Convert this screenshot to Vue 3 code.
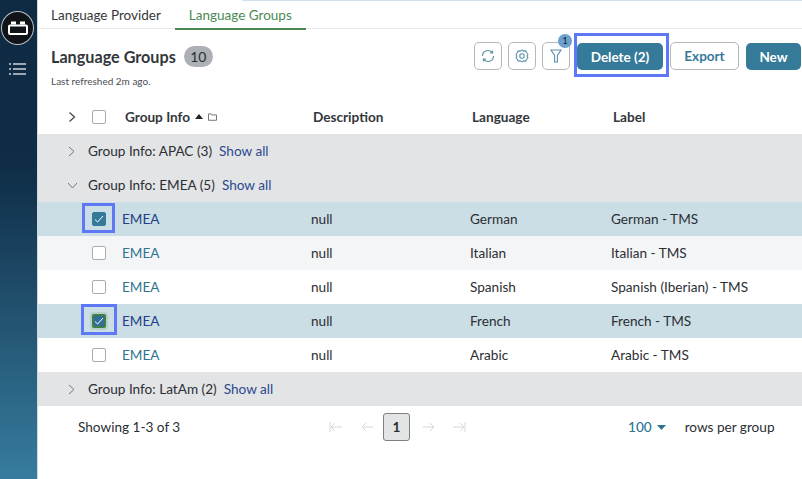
<script setup>
const rows = [
  { lang: 'German', label: 'German - TMS', state: 'checked' },
  { lang: 'Italian', label: 'Italian - TMS', state: 'alt' },
  { lang: 'Spanish', label: 'Spanish (Iberian) - TMS', state: '' },
  { lang: 'French', label: 'French - TMS', state: 'focus' },
  { lang: 'Arabic', label: 'Arabic - TMS', state: '' },
]
</script>

<template>
  <div class="page">
    <aside class="side">
      <div class="logo">
        <svg width="20" height="14" viewBox="0 0 20 14" fill="none">
          <rect x="1" y="4.5" width="18" height="8.5" rx="1" stroke="#fff" stroke-width="2" />
          <rect x="3" y="0.5" width="5" height="3" fill="#fff" />
          <rect x="12" y="0.5" width="5" height="3" fill="#fff" />
        </svg>
      </div>
      <svg class="menu" width="17" height="14" viewBox="0 0 17 14" stroke="#9aa9b5" stroke-width="2">
        <path d="M0 2h2M4 2h13M0 7h2M4 7h13M0 12h2M4 12h13" />
      </svg>
    </aside>
    <main class="main">
      <div class="topline"></div>
      <nav class="tabs">
        <span class="tab">Language Provider</span>
        <span class="tab active">Language Groups</span>
      </nav>
      <header class="head">
        <div class="titles">
          <div class="title-row">
            <h1>Language Groups</h1>
            <span class="count">10</span>
          </div>
          <div class="refreshed">Last refreshed 2m ago.</div>
        </div>
        <div class="actions">
          <button class="icon-btn">
            <svg width="14" height="14" viewBox="0 0 14 14" fill="none" stroke="#5b8fa8" stroke-width="1.1">
              <path d="M1.5 7a5.5 5.5 0 0 1 9.8-3.4M12.5 7a5.5 5.5 0 0 1-9.8 3.4" />
              <path d="M11.6 1.4v2.5H9.1M2.4 12.6v-2.5h2.5" />
            </svg>
          </button>
          <button class="icon-btn">
            <svg width="14" height="14" viewBox="0 0 16 16" fill="none" stroke="#5b8fa8" stroke-width="1.2">
              <path d="M8 1.2l2 1.2 2.3-.2 1 2.1 1.5 1.7L13.9 8l.9 2-1.5 1.7-1 2.1-2.3-.2-2 1.2-2-1.2-2.3.2-1-2.1L1.2 10l.9-2-.9-2 1.5-1.7 1-2.1 2.3.2z" />
              <circle cx="8" cy="8" r="2.6" />
            </svg>
          </button>
          <button class="icon-btn">
            <svg width="12" height="14" viewBox="0 0 12 14" fill="none" stroke="#5b8fa8" stroke-width="1.1">
              <path d="M1 1h10L7.4 6.5V13H4.6V6.5z" />
            </svg>
            <span class="badge">1</span>
          </button>
          <div class="del-wrap">
            <button class="primary del">Delete (2)</button>
            <span class="del-focus"></span>
          </div>
          <button class="outline">Export</button>
          <button class="primary new">New</button>
        </div>
      </header>
      <div class="row headrow">
        <span class="chev"><svg width="8" height="12" viewBox="0 0 8 12" fill="none" stroke="#444" stroke-width="1.2"><path d="M1.5 1.5L6.5 6l-5 4.5" /></svg></span>
        <span class="cb-cell"><span class="cb"></span></span>
        <span class="c1 hd">Group Info
          <svg class="sort" width="8" height="5" viewBox="0 0 8 5"><path d="M4 0L8 5H0z" fill="#222" /></svg>
          <svg class="folder" width="9" height="8" viewBox="0 0 10 9" fill="none" stroke="#555" stroke-width="0.9"><path d="M.5 1h3l1 1.2h5v6H.5z" /></svg>
        </span>
        <span class="c2 hd">Description</span>
        <span class="c3 hd">Language</span>
        <span class="c4 hd">Label</span>
      </div>
      <div class="group">
        <span class="g-icon"><svg width="7" height="11" viewBox="0 0 7 11" fill="none" stroke="#777" stroke-width="1"><path d="M1 1l5 4.5L1 10" /></svg></span>
        <span>Group Info: APAC (3)</span><a>Show all</a>
      </div>
      <div class="group">
        <span class="g-icon down"><svg width="11" height="7" viewBox="0 0 11 7" fill="none" stroke="#777" stroke-width="1"><path d="M1 1l4.5 5L10 1" /></svg></span>
        <span>Group Info: EMEA (5)</span><a>Show all</a>
      </div>
      <div v-for="r in rows" :key="r.lang" class="row data" :class="{ sel: r.state === 'checked' || r.state === 'focus', alt: r.state === 'alt' }">
        <span class="chev"></span>
        <span class="cb-cell">
          <span class="cb" :class="{ on: r.state === 'checked' || r.state === 'focus', ring: r.state === 'focus' }">
            <svg v-if="r.state === 'checked' || r.state === 'focus'" width="10" height="8" viewBox="0 0 10 8" fill="none" stroke="#fff" stroke-width="1"><path d="M1 4.5l2.6 2.5L9 1" /></svg>
          </span>
          <span v-if="r.state === 'checked'" class="mark mark-a"></span>
          <span v-if="r.state === 'focus'" class="mark mark-b"></span>
        </span>
        <a class="c1 link">EMEA</a>
        <span class="c2">null</span>
        <span class="c3">{{ r.lang }}</span>
        <span class="c4">{{ r.label }}</span>
      </div>
      <div class="group">
        <span class="g-icon"><svg width="7" height="11" viewBox="0 0 7 11" fill="none" stroke="#777" stroke-width="1"><path d="M1 1l5 4.5L1 10" /></svg></span>
        <span>Group Info: LatAm (2)</span><a>Show all</a>
      </div>
      <footer class="foot">
        <span class="showing">Showing 1-3 of 3</span>
        <div class="pager">
          <svg width="14" height="10" viewBox="0 0 14 10" fill="none" stroke="#d4d7da"><path d="M1 0v10M13 5H2M6 1L2 5l4 4" /></svg>
          <svg class="prev" width="14" height="10" viewBox="0 0 14 10" fill="none" stroke="#d4d7da"><path d="M13 5H2M6 1L2 5l4 4" /></svg>
          <span class="page-no">1</span>
          <svg class="next" width="14" height="10" viewBox="0 0 14 10" fill="none" stroke="#d4d7da"><path d="M1 5h11M8 1l4 4-4 4" /></svg>
          <svg class="last" width="14" height="10" viewBox="0 0 14 10" fill="none" stroke="#d4d7da"><path d="M13 0v10M1 5h11M8 1l4 4-4 4" /></svg>
        </div>
        <div class="per">
          <span class="num">100</span>
          <svg class="caret" width="9" height="5" viewBox="0 0 9 5"><path d="M0 0h9L4.5 5z" fill="#2f7391" /></svg>
          <span class="rpg">rows per group</span>
        </div>
      </footer>
    </main>
  </div>
</template>

<style>
html, body { margin: 0; background: #fff; overflow: hidden; }
</style>

<style scoped>
.page { display: flex; width: 802px; height: 479px; overflow: hidden; font-family: Lato, "Open Sans", sans-serif; font-size: 13.6px; color: #2b2f33; background: #fff; }
.side { width: 38px; flex: none; box-sizing: border-box; height: 479px; border-right: 1px solid #cfd8de; background: linear-gradient(#0f2a43 0%, #0f2d47 35%, #377c9e 100%); display: flex; flex-direction: column; align-items: flex-start; }
.logo { width: 33px; height: 34px; margin: 11px 0 0 1px; flex: none; box-sizing: border-box; border-radius: 50%; background: #101418; border: 1px solid #b9bfc4; display: flex; align-items: center; justify-content: center; }
.menu { margin: 17px 0 0 9px; }
.main { flex: 1; min-width: 0; position: relative; }
.topline { position: absolute; top: 0; left: 204px; right: 0; height: 1px; background: #cfe3ee; }
.tabs { height: 28px; border-bottom: 1px solid #e8eaec; display: flex; padding-left: 13px; }
.tab { padding: 7px 14px 0 0; line-height: 16px; font-size: 13.5px; color: #33383c; }
.tab.active { color: #4a8a52; border-bottom: 2px solid #4a8a52; height: 21px; padding: 7px 14px 0; }
.head { height: 71px; display: flex; justify-content: space-between; padding: 13px 0 0 13px; box-sizing: border-box; }
.title-row { display: flex; align-items: center; gap: 8px; height: 29px; }
h1 { margin: 0; font-size: 16.2px; font-weight: 700; color: #33373b; }
.count { background: #adb0b5; color: #2b2f33; border-radius: 11px; width: 29px; height: 21px; line-height: 21px; text-align: center; font-size: 14px; }
.refreshed { font-size: 10px; color: #4a4e52; margin-top: 4px; line-height: 12px; }
.actions { display: flex; align-items: flex-start; gap: 6px; margin-right: 1px; }
button { font-family: inherit; box-sizing: border-box; cursor: pointer; }
.icon-btn { width: 28px; height: 28px; border: 1px solid #b4b8bb; border-radius: 5px; background: #fff; padding: 0; display: flex; align-items: center; justify-content: center; position: relative; }
.badge { position: absolute; top: -9px; right: -3px; width: 14px; height: 14px; border-radius: 50%; background: #6ba0cf; color: #123; font-size: 9.5px; line-height: 14px; text-align: center; }
.primary { background: #367a99; color: #fff; border: none; border-radius: 5px; font-weight: 700; font-size: 13.5px; height: 27px; margin-top: 1px; padding: 0; }
.del-wrap { position: relative; display: flex; margin-left: 1px; }
.del { width: 86px; }
.del-focus { position: absolute; left: -3px; top: -9px; width: 95px; height: 44px; box-sizing: border-box; border: 3px solid #5f78f5; pointer-events: none; }
.outline { width: 69px; height: 28px; margin-left: 1px; background: #fff; border: 1px solid #b4b8bb; border-radius: 5px; color: #367a99; font-weight: 700; font-size: 13.5px; padding: 0; }
.new { width: 55px; margin-left: 1px; }
.row { display: flex; align-items: center; height: 34px; }
.chev { width: 54px; flex: none; padding-left: 30px; box-sizing: border-box; display: flex; }
.cb-cell { width: 33px; flex: none; align-self: stretch; position: relative; display: flex; align-items: center; }
.cb { width: 14px; height: 14px; display: flex; align-items: center; justify-content: center; box-sizing: border-box; border: 1.5px solid #a9adb0; border-radius: 2px; background: #fff; }
.cb.on { background: #367a99; border: 1px solid #367a99; }
.cb.ring { background: #2f6f9a; border: 2px solid #3f7f45; box-shadow: 0 0 0 2px #b7cfc9; }
.mark { position: absolute; box-sizing: border-box; border: 3px solid #5f78f5; }
.mark-a { left: -10px; top: 1px; width: 33px; height: 30px; }
.mark-b { left: -11px; top: 0; width: 36px; height: 31px; }
.c1 { width: 188px; flex: none; display: flex; align-items: center; }
.c2 { width: 159px; flex: none; }
.c3 { width: 141px; flex: none; }
.c4 { flex: none; }
.hd { font-weight: 700; color: #33373b; }
.sort { margin: 0 5px 2px 5px; }
.data .cb-cell { width: 30px; }
.data .c1 { width: 189px; }
.group { height: 34px; background: #e3e4e6; display: flex; align-items: center; padding-left: 30px; }
.g-icon { width: 20px; flex: none; display: flex; }
.g-icon.down { margin-left: -1px; width: 21px; }
.group a { margin-left: 7px; color: #2c4a8f; }
.data { background: #fff; }
.data.sel { background: #cbdde5; }
.data.alt { background: #f4f5f7; }
.link { color: #2f7391; }
.sel .link { color: #233f85; }
.foot { height: 42px; display: flex; align-items: center; padding-left: 40px; }
.showing { width: 251px; flex: none; }
.pager { display: flex; align-items: center; width: 299px; flex: none; }
.prev { margin-left: 17px; }
.page-no { width: 27px; height: 28px; box-sizing: border-box; border: 1.5px solid #7d8184; border-radius: 3px; background: #e3e4e6; font-weight: 700; display: flex; align-items: center; justify-content: center; margin: 0 12px 0 9px; }
.last { margin-left: 16px; }
.per { display: flex; align-items: center; }
.num { color: #2f7391; font-weight: 500; font-size: 13.6px; }
.caret { margin-left: 5px; }
.rpg { margin-left: 19px; }
</style>
